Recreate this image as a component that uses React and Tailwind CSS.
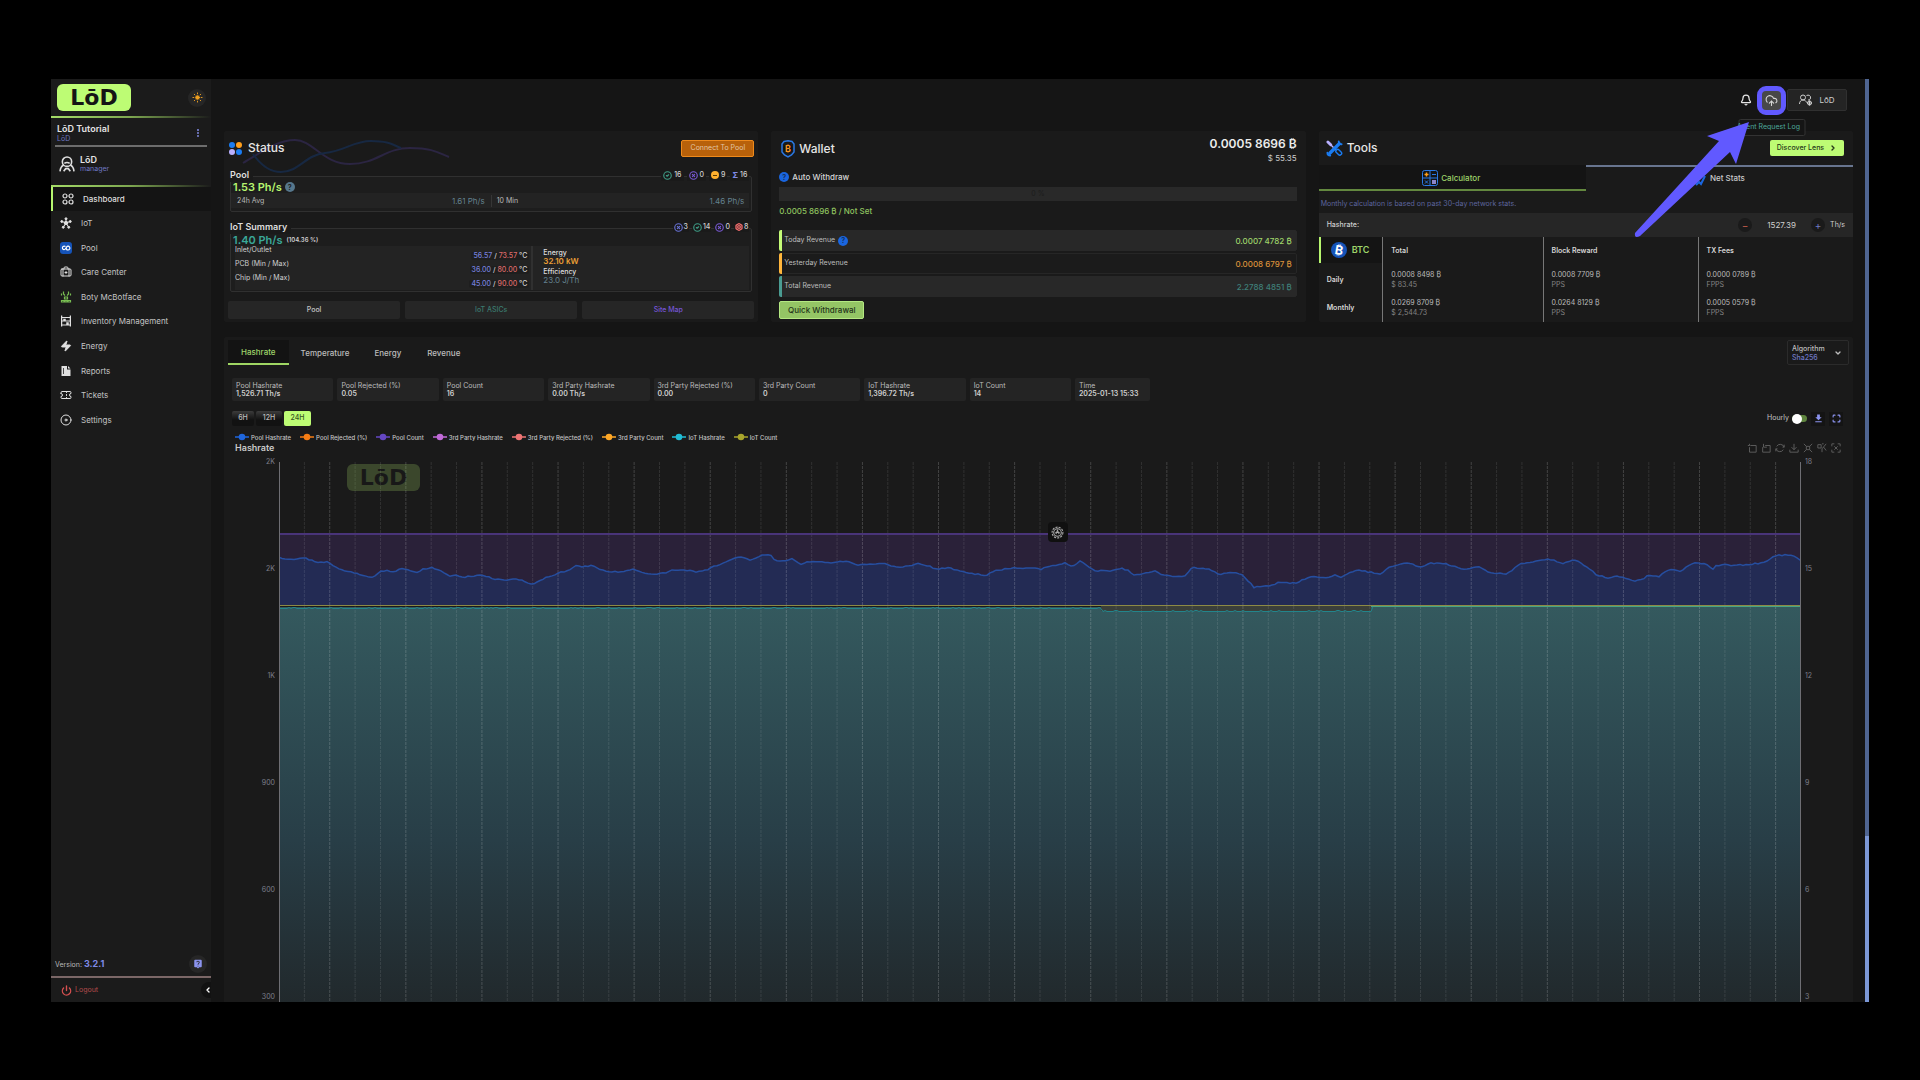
import React from 'react';
import {
    Bell, Bolt, BriefcaseMedical, ChevronDown, ChevronLeft, ChevronRight, CircleCheck, CircleX,
    CloudUpload, Disc, EllipsisVertical, Maximize, Power, Sun, Ticket, Zap,
} from 'lucide-react';
import { MdDownload, MdLiveHelp } from 'react-icons/md';

// ---------- data ----------

const NAV_ITEMS = [
    { label: 'IoT', icon: IotIcon },
    { label: 'Pool', icon: PoolIcon },
    { label: 'Care Center', icon: BriefcaseMedical },
    { label: 'Boty McBotface', icon: BotIcon },
    { label: 'Inventory Management', icon: ShelvesIcon },
    { label: 'Energy', icon: EnergyIcon },
    { label: 'Reports', icon: ReportIcon },
    { label: 'Tickets', icon: Ticket },
    { label: 'Settings', icon: Disc },
];

const TEMPERATURES = [
    { label: 'Inlet/Outlet', min: '56.57', max: '73.57' },
    { label: 'PCB (Min / Max)', min: '36.00', max: '80.00' },
    { label: 'Chip (Min / Max)', min: '45.00', max: '90.00' },
];

const REVENUES = [
    { label: 'Today Revenue', value: '0.0007 4782 ₿', help: true, row: 'bg-[#282828] border-[#282828]', bar: 'bg-[#c5fc77]', text: 'text-[#9fd46a]' },
    { label: 'Yesterday Revenue', value: '0.0008 6797 ₿', row: 'bg-[#1b1b1b] border-[#262626]', bar: 'bg-[#ffb63c]', text: 'text-[#d9903a]' },
    { label: 'Total Revenue', value: '2.2788 4851 ₿', row: 'bg-[#282828] border-[#282828]', bar: 'bg-[#4a9c92]', text: 'text-[#3f7f78]' },
];

const PROFIT_ROWS = [
    { label: 'Daily', cells: [['0.0008 8498 ₿', '$ 83.45'], ['0.0008 7709 ₿', 'PPS'], ['0.0000 0789 ₿', 'FPPS']] },
    { label: 'Monthly', cells: [['0.0269 8709 ₿', '$ 2,544.73'], ['0.0264 8129 ₿', 'PPS'], ['0.0005 0579 ₿', 'FPPS']] },
];

const STATS = [
    ['Pool Hashrate', '1,526.71 Th/s'],
    ['Pool Rejected (%)', '0.05'],
    ['Pool Count', '16'],
    ['3rd Party Hashrate', '0.00 Th/s'],
    ['3rd Party Rejected (%)', '0.00'],
    ['3rd Party Count', '0'],
    ['IoT Hashrate', '1,396.72 Th/s'],
    ['IoT Count', '14'],
];

const LEGEND = [
    ['Pool Hashrate', '#1f66dd'],
    ['Pool Rejected (%)', '#f57c14'],
    ['Pool Count', '#6547c4'],
    ['3rd Party Hashrate', '#c06ad8'],
    ['3rd Party Rejected (%)', '#ee7474'],
    ['3rd Party Count', '#ffa827'],
    ['IoT Hashrate', '#21bcd4'],
    ['IoT Count', '#a8a52c'],
];

// pool hashrate line, [x, y] in chart units
const POOL_LINE = [
    [0, 96], [14, 98], [20, 96], [29, 97], [39, 100], [48, 100], [61, 108], [76, 111], [84, 114], [93, 115],
    [103, 109], [108, 108], [113, 110], [122, 107], [129, 108], [138, 110], [145, 107], [153, 105], [161, 109],
    [171, 114], [178, 113], [185, 115], [205, 113], [212, 116], [224, 118], [237, 117], [245, 119], [251, 122],
    [260, 120], [265, 116], [274, 114], [282, 110], [289, 109], [296, 104], [303, 105], [314, 103], [321, 107],
    [327, 109], [343, 110], [355, 107], [363, 111], [382, 112], [394, 108], [407, 108], [418, 110], [430, 107],
    [441, 102], [453, 97], [462, 95], [472, 98], [483, 93], [491, 92], [496, 99], [505, 99], [513, 96], [521, 103],
    [532, 99], [548, 101], [566, 99], [578, 103], [603, 101], [621, 106], [639, 101], [658, 107], [670, 106],
    [688, 111], [707, 113], [719, 108], [737, 106], [751, 106], [762, 107], [770, 104], [778, 104], [785, 101],
    [792, 104], [797, 103], [801, 99], [816, 109], [835, 109], [842, 106], [850, 109], [855, 113], [870, 111],
    [876, 109], [882, 113], [905, 115], [913, 105], [930, 107], [941, 113], [950, 110], [962, 112], [975, 125],
    [992, 124], [999, 121], [1017, 121], [1033, 114], [1049, 116], [1056, 113], [1062, 116], [1071, 110],
    [1078, 108], [1102, 112], [1109, 105], [1130, 101], [1140, 105], [1154, 101], [1166, 101], [1182, 107],
    [1201, 105], [1209, 110], [1228, 112], [1241, 102], [1271, 97], [1284, 102], [1294, 98], [1301, 100],
    [1311, 108], [1318, 113], [1329, 116], [1337, 114], [1349, 117], [1355, 119], [1364, 117], [1369, 113],
    [1379, 115], [1384, 111], [1394, 107], [1401, 110], [1415, 100], [1429, 103], [1434, 108], [1438, 103],
    [1461, 103], [1483, 101], [1499, 93], [1511, 93], [1522, 98],
];

// repeatable noise in the range 0..1
const noise = (n) => {
    const v = Math.sin(n * 12.9898) * 43758.5453;
    return v - Math.floor(v);
};

// resample the line every 3 units with a little noise
const poolPath = () => {
    const out = [];
    let i = 0;
    for (let x = 0; x <= 1521; x += 3) {
        while (POOL_LINE[i + 1][0] < x) i++;
        const [x0, y0] = POOL_LINE[i];
        const [x1, y1] = POOL_LINE[i + 1];
        const y = y0 + ((y1 - y0) * (x - x0)) / (x1 - x0) + (noise(x) - 0.5) * 1.4;
        out.push(`${x},${y.toFixed(1)}`);
    }
    out.push('1522,98');
    return out.join(' ');
};

// IoT hashrate: dips while some machines are down, then recovers
const iotPath = () => {
    const out = [];
    for (let x = 0; x <= 1522; x += 2) {
        let base = 146.5;
        if (x > 822) base = 149.5;
        if (x > 1092) base = 144.5;
        const y = base - (x < 1092 && noise(x) > 0.8 ? 1 : 0);
        out.push(`${x},${y}`);
    }
    return out.join(' ');
};

// ---------- small drawings ----------

function IotIcon(props) {
    return (
        <svg viewBox="0 0 24 24" fill="currentColor" stroke="currentColor" strokeWidth="2" {...props}>
            <path d="M12 12V4M12 12L4 9M12 12l8-3M12 12l-5 8M12 12l5 8" />
            <circle cx="12" cy="12" r="3.5" />
            <circle cx="12" cy="3.5" r="2" /><circle cx="3.5" cy="9" r="2" /><circle cx="20.5" cy="9" r="2" />
            <circle cx="6.5" cy="20.5" r="2" /><circle cx="17.5" cy="20.5" r="2" />
        </svg>
    );
}

function PoolIcon(props) {
    return (
        <svg viewBox="0 0 24 24" {...props}>
            <rect width="24" height="24" rx="6" fill="#1553b8" />
            <path d="M11 9C7 7 4 10 5 13s5 3 7-1 5-5 7-2 0 6-3 6-4-2-3-4" fill="none" stroke="#fff" strokeWidth="2.4" />
        </svg>
    );
}

function BotIcon({ className }) {
    return (
        <svg viewBox="0 0 24 24" fill="none" stroke="#78bd52" strokeWidth="2.4" className={className}>
            <path d="M7 1v5l3 3M17 1v5l-3 3M3 5v4M21 5v4M9 12h6v4H9zM3 22v-3h5v3zM16 22v-3h5v3zM10 22v-3h4v3z" />
        </svg>
    );
}

function ShelvesIcon(props) {
    return (
        <svg viewBox="0 0 24 24" fill="currentColor" {...props}>
            <path d="M2 1h2.500v3h15V1H22v22h-2.500v-2h-15v2H2zM4.500 6v5h2V7.500h5V11h8V6zM4.500 13v6h8v-4.500h5V19h2v-6z" />
        </svg>
    );
}

function EnergyIcon(props) {
    return <Zap fill="currentColor" {...props} />;
}

function ReportIcon(props) {
    return (
        <svg viewBox="0 0 24 24" fill="currentColor" {...props}>
            <path d="M3 2h11v7h7v13H3z" /><path d="M16 2l5 5h-5z" />
            <path d="M7 6v12" stroke="#1b1b1b" strokeWidth="1.5" />
        </svg>
    );
}

function PersonIcon(props) {
    return (
        <svg viewBox="0 0 24 24" fill="none" stroke="currentColor" strokeWidth="2.4" {...props}>
            <circle cx="12" cy="8.5" r="7" />
            <path d="M7 13.500C4 15 2 18 1.500 23M17 13.500c3 1.500 5 4.500 5.500 9.500M7 23l3-4h4l3 4M8 11c3-2 5-2 8 0" />
        </svg>
    );
}

function DashIcon(props) {
    return (
        <svg viewBox="0 0 24 24" fill="none" stroke="currentColor" strokeWidth="2.4" {...props}>
            <circle cx="6" cy="6" r="4" /><circle cx="18" cy="6" r="4" />
            <circle cx="6" cy="18" r="4" /><circle cx="18" cy="18" r="4" />
        </svg>
    );
}

function UsersIcon(props) {
    return (
        <svg viewBox="0 0 28 24" fill="none" stroke="currentColor" strokeWidth="2" {...props}>
            <circle cx="8" cy="7" r="5" /><path d="M1 20c0-5 3-8 7-8s6 2 7 5" />
            <path d="M15 3c4-2 9 0 8 5 0 3-3 4-5 4" /><circle cx="21" cy="18" r="4" /><path d="M21 13v10M16 18h10" />
        </svg>
    );
}

function StatusIcon() {
    return (
        <svg viewBox="0 0 13 13" className="size-[13px]">
            <circle cx="3" cy="3" r="3" fill="#1a7cf2" /><circle cx="10" cy="3" r="3" fill="#ff9f1c" />
            <circle cx="3" cy="10" r="3" fill="#b9b0ff" /><circle cx="10" cy="10" r="3" fill="#1a7cf2" />
        </svg>
    );
}

function WalletIcon() {
    return (
        <svg viewBox="0 0 14 18" className="h-[18px] w-[14px]" fill="none">
            <path d="M3 1.500L7 0.800l4 0.700 2 2.500v8l-2.500 3L7 17l-3.500-2L1 12V4z" stroke="#2a78e4" strokeWidth="1.5" />
            <circle cx="7" cy="8.5" r="4.5" fill="#111" />
            <text x="7" y="12" textAnchor="middle" fontSize="9" fontWeight="700" fill="#f59420">₿</text>
        </svg>
    );
}

function ToolsIcon() {
    return (
        <svg viewBox="0 0 18 18" className="size-[17px]" fill="none" strokeLinecap="round">
            <path d="M2 2l3 3" stroke="#b9b0ff" strokeWidth="3" />
            <path d="M5 5l5 5" stroke="#b9b0ff" strokeWidth="1.5" />
            <path d="M4 14L14 4" stroke="#1a7cf2" strokeWidth="3.5" />
            <path d="M1.500 13.500a3 3 0 0 0 3 3M13.500 1.500a3 3 0 0 0 3 3" stroke="#1a7cf2" strokeWidth="2" />
            <rect x="10" y="11" width="7" height="4" rx="2" transform="rotate(45 13.5 13)" stroke="#1a7cf2" strokeWidth="1.5" />
        </svg>
    );
}

function CalculatorIcon() {
    return (
        <svg viewBox="0 0 16 16" className="size-4" fill="none" stroke="#2a78e4">
            <rect x="0.5" y="0.5" width="15" height="15" rx="2" /><path d="M8 1v14M1 8h14" />
            <path d="M4.500 2.500v4M2.500 4.500h4" stroke="#ff9f1c" strokeWidth="1.5" />
            <path d="M10 4.500h4M3 10.500l3 3M6 10.500l-3 3" />
            <rect x="10" y="10" width="4" height="4" fill="#8d86c9" stroke="none" />
        </svg>
    );
}

function BitcoinIcon() {
    return (
        <svg viewBox="0 0 18 18" className="size-4">
            <circle cx="9" cy="9" r="9" fill="#1553b8" />
            <text x="9" y="14" textAnchor="middle" fontSize="14" fontWeight="700" fill="#fff" transform="rotate(10 9 9)">₿</text>
        </svg>
    );
}

const Logo = ({ className }) => (
    <div className={`flex items-center justify-center rounded-md font-['DejaVu_Sans'] text-[22px] leading-none font-bold text-[#151515] ${className}`}>
        LōD
    </div>
);

const HelpDot = ({ className }) => (
    <span className={`flex size-[10px] items-center justify-center rounded-full text-[7px] leading-none font-bold ${className}`}>?</span>
);

const Count = ({ icon, value, tight }) => (
    <span className={`flex items-center bg-[#1a1a1a] ${tight ? 'gap-px px-px' : 'gap-[2px] px-[2px]'}`}>{icon}{value}</span>
);

// ---------- sidebar ----------

function Sidebar() {
    return (
        <aside className="flex w-40 shrink-0 flex-col bg-[#1b1b1b]">
            <div className="flex h-[37px] items-center justify-between pr-[5px] pl-[6px]">
                <Logo className="h-[27px] w-[74px] bg-[#bdfc74]" />
                <button aria-label="Theme" className="flex size-[18px] items-center justify-center rounded-full bg-[#262626]">
                    <Sun className="size-[11px] text-[#f0a020]" fill="currentColor" />
                </button>
            </div>
            <div className="h-[2px] bg-linear-to-r from-[#a5dc68] via-[#7da650] to-transparent" />
            <div className="mx-1 flex h-[29px] items-center justify-between border-b-2 border-[#6d6d6d] pt-[3px] pr-1 pl-[2px]">
                <div>
                    <div className="text-[9px] leading-[10px] font-semibold text-[#e4e4e4]">LōD Tutorial</div>
                    <div className="text-[7px] leading-[9px] text-[#6f78c4]">LōD</div>
                </div>
                <button aria-label="More"><EllipsisVertical className="size-[10px] text-[#7f88dc]" strokeWidth={3} /></button>
            </div>
            <div className="flex h-[38px] items-center gap-[5px] pb-1 pl-2">
                <PersonIcon className="size-4 text-[#dedede]" />
                <div>
                    <div className="text-[9px] leading-[10px] font-semibold text-[#e4e4e4]">LōD</div>
                    <div className="text-[7px] leading-[8px] text-[#6f78c4]">manager</div>
                </div>
            </div>
            <div className="h-[2px] bg-linear-to-r from-[#a5dc68] via-[#7da650] to-transparent" />
            <nav className="text-[8px] text-[#c4c4c4]">
                <a href="#dashboard" className="flex h-6 items-center gap-[9px] border-l-2 border-[#b6f56f] bg-[#141414] pl-[9px] font-medium text-[#dedede]">
                    <DashIcon className="size-3" />
                    Dashboard
                </a>
                <div className="grid h-[221px] grid-rows-9">
                    {NAV_ITEMS.map(({ label, icon: Icon }) => (
                        <a key={label} href={`#${label}`} className="flex items-center gap-[9px] pl-[9px]">
                            <Icon className="size-3 text-[#e0e0e0]" />
                            {label}
                        </a>
                    ))}
                </div>
            </nav>
            <div className="mt-auto flex h-6 items-center justify-between pr-1 pl-1">
                <span className="text-[7px] text-[#b9b9b9]">Version: <b className="text-[9px] text-[#7f8ae6]">3.2.1</b></span>
                <button aria-label="Help" className="flex size-[18px] items-center justify-center rounded-full bg-[#262626]">
                    <MdLiveHelp className="size-[10px] text-[#8b93ee]" />
                </button>
            </div>
            <div className="flex h-[26px] items-center justify-between border-t-2 border-[#7b6767] pl-[10px]">
                <a href="#logout" className="flex items-center gap-[3px] text-[7px] text-[#b34b4b]">
                    <Power className="size-[11px] text-[#d65050]" strokeWidth={3} />
                    Logout
                </a>
                <button aria-label="Collapse" className="flex h-4 w-[10px] items-center justify-end rounded-l-full bg-[#121212]">
                    <ChevronLeft className="-mr-px size-2 text-white" strokeWidth={4} />
                </button>
            </div>
        </aside>
    );
}

// ---------- top bar ----------

function TopBar() {
    return (
        <header className="relative z-20 flex h-[52px] items-start justify-end pt-[7px] pr-[6px]">
            <button aria-label="Notifications" className="mt-2 mr-[5px] text-[#e6e6e6]">
                <Bell className="size-[12px]" strokeWidth={2.5} />
            </button>
            <div className="relative">
                <button aria-label="Agent requests" className="flex size-[29px] items-center justify-center rounded-[9px] border-5 border-[#6159ff] bg-[#484848] text-[#d8d8d8]">
                    <CloudUpload className="size-[13px]" />
                </button>
                <div role="tooltip" className="absolute top-[33px] left-1/2 flex h-[17px] w-[67px] -translate-x-1/2 items-center justify-end rounded-xs border border-[#333] bg-[#151515] pr-1 text-[7px] whitespace-nowrap text-[#4da89b]">
                    Agent Request Log
                </div>
                {/* pointer from the tools card to the request log */}
                <svg viewBox="0 0 120 120" className="pointer-events-none absolute top-[35px] right-[34px] size-[120px]">
                    <path
                        d="M117 1L75 15L87 20L3 112Q2 118 8 115L98 31L104 43Z"
                        fill="#6159ff"
                    />
                </svg>
            </div>
            <button className="mt-[3px] ml-[1px] flex h-[22px] w-[60px] items-center justify-center gap-[6px] rounded-xs border border-[#303030] bg-[#242424] text-[8px] text-[#cfcfcf]">
                <UsersIcon className="h-[12px] w-[14px]" />
                LōD
            </button>
        </header>
    );
}

// ---------- cards ----------

function StatusCard() {
    return (
        <section className="relative rounded-xs bg-[#1a1a1a]">
            <svg viewBox="0 0 208 36" fill="none" strokeWidth="2" className="absolute top-[6px] left-[18px] h-9 w-[208px]">
                <path d="M1 26C20 15 35 3 53 3s28 24 55 24 35-16 60-16 30 6 39 9" stroke="#2b2542" />
                <path d="M11 17C18 27 28 35 39 35c18 0 24-17 44-19s28-12 46-12 22 4 30 7" stroke="#172842" />
            </svg>
            <div className="relative flex h-[34px] items-center justify-between pr-1 pl-[5px]">
                <h2 className="flex items-center gap-[6px] text-[12px] font-medium text-[#e6e6e6]"><StatusIcon />Status</h2>
                <button className="h-[17px] w-[73px] rounded-xs border border-[#ee8a1c] bg-[#b8610a] text-[7px] text-[#e2c7a8]">Connect To Pool</button>
            </div>

            <div className="mx-[6px] mt-[2px]">
                <div className="relative flex h-4 items-center justify-between">
                    <h3 className="bg-[#1a1a1a] pr-1 text-[9px] font-semibold text-[#dedede]">Pool</h3>
                    <div className="mr-[3px] flex gap-[3px] text-[7px] font-medium text-[#d0d0d0]">
                        <Count icon={<CircleCheck className="size-[9px] text-[#3e9c86]" strokeWidth={3} />} value="16" />
                        <Count icon={<CircleX className="size-[9px] text-[#7a5ad6]" strokeWidth={3} />} value="0" />
                        <Count icon={<span className="flex size-[8px] items-center justify-center rounded-full bg-[#ffb02e]"><span className="h-px w-1 bg-[#5a3a00]" /></span>} value="9" />
                        <Count icon={<b className="text-[8px] text-[#7f8ae6]">Σ</b>} value="16" />
                    </div>
                </div>
                <div className="-mt-[7px] h-9 rounded-xs border border-[#303030] bg-[#1d1d1d] pt-1">
                    <div className="flex h-3 items-center gap-[3px] pl-[2px] text-[11px] leading-3 font-semibold text-[#b6f56f]">
                        1.53 Ph/s <HelpDot className="bg-[#56778c] text-[#1d1d1d]" />
                    </div>
                    <div className="mr-[2px] flex h-[15px] items-center bg-[#232323] text-[8px]">
                        <div className="flex flex-1 items-center justify-between px-[6px]"><span className="text-[7px] leading-3 text-[#b9b9b9]">24h Avg</span><span className="leading-3 text-[#64828f]">1.61 Ph/s</span></div>
                        <div className="flex flex-1 items-center justify-between border-l border-[#363636] px-[5px]"><span className="text-[7px] leading-3 text-[#b9b9b9]">10 Min</span><span className="leading-3 text-[#64828f]">1.46 Ph/s</span></div>
                    </div>
                </div>
            </div>

            <div className="mx-[6px] mt-[7px]">
                <div className="relative flex h-4 items-center justify-between">
                    <h3 className="bg-[#1a1a1a] pr-1 text-[9px] font-semibold text-[#dedede]">IoT Summary</h3>
                    <div className="mr-[3px] flex gap-[3px] text-[7px] font-medium text-[#d0d0d0]">
                        <Count tight icon={<CircleX className="size-[9px] text-[#6872d6]" strokeWidth={3} />} value="3" />
                        <Count tight icon={<CircleCheck className="size-[9px] text-[#3e9c86]" strokeWidth={3} />} value="14" />
                        <Count tight icon={<CircleX className="size-[9px] text-[#7a5ad6]" strokeWidth={3} />} value="0" />
                        <Count tight icon={<Bolt className="size-[8px] text-[#ee6b6b]" strokeWidth={4} />} value="8" />
                    </div>
                </div>
                <div className="-mt-[7px] h-16 rounded-xs border border-[#303030] bg-[#1d1d1d] pt-[5px]">
                    <div className="flex h-3 items-center gap-1 pl-[2px] text-[11px] leading-3 font-semibold text-[#3aa899]">
                        1.40 Ph/s <span className="text-[6px] text-[#d0d0d0]">(104.36 %)</span>
                    </div>
                    <div className="mr-[2px] ml-1 flex h-11 bg-[#232323]">
                        <div className="w-[58%] border-r-2 border-[#303030] pr-[2px]">
                            {TEMPERATURES.map((t) => (
                                <div key={t.label} className="flex h-[14px] justify-between text-[7px] leading-[8px] text-[#d0d0d0]">
                                    <span>{t.label}</span>
                                    <span className="self-end rounded-xs bg-[#1e1e1e] px-[2px] font-medium">
                                        <span className="text-[#7680dc]">{t.min}</span> / <span className="text-[#dc6a6a]">{t.max}</span> °C
                                    </span>
                                </div>
                            ))}
                        </div>
                        <dl className="pt-[3px] pl-[10px] text-[8px] leading-[8px] text-[#64828f]">
                            <dt className="text-[7px] font-medium text-[#dedede]">Energy</dt>
                            <dd className="font-semibold text-[#eb9f35]">32.10 kW</dd>
                            <dt className="mt-[3px] text-[7px] font-medium text-[#dedede]">Efficiency</dt>
                            <dd>23.0 J/Th</dd>
                        </dl>
                    </div>
                </div>
            </div>

            <div className="mx-1 mt-[9px] grid grid-cols-3 gap-[5px] text-[7px] font-medium">
                <button className="h-[18px] rounded-xs bg-[#262626] text-[#c4c4c4]">Pool</button>
                <button className="h-[18px] rounded-xs bg-[#262626] text-[#3b7a6e]">IoT ASICs</button>
                <button className="h-[18px] rounded-xs bg-[#262626] text-[#7656d8]">Site Map</button>
            </div>
        </section>
    );
}

function WalletCard() {
    return (
        <section className="rounded-xs bg-[#1a1a1a] pr-[9px] pl-2">
            <div className="flex h-9 items-center justify-between">
                <h2 className="flex items-center gap-1 pl-[2px] text-[12px] font-medium text-[#e6e6e6]"><WalletIcon />Wallet</h2>
                <div className="pt-[3px] text-right leading-[14px]">
                    <div className="text-[12px] font-semibold text-[#ececec]">0.0005 8696 ₿</div>
                    <div className="text-[8px] leading-[14px] text-[#cfcfcf]">$ 55.35</div>
                </div>
            </div>
            <div className="mt-[3px] flex h-[14px] items-center gap-[3px] text-[8px] font-medium text-[#d6d6d6]">
                <HelpDot className="bg-[#1a66e0] text-[#12305f]" />Auto Withdraw
            </div>
            <div role="progressbar" aria-label="Auto Withdraw" aria-valuenow={0} className="mt-[3px] h-[14px] bg-[#292929] text-center text-[7px] leading-[14px] text-[#1c1c1c]">0 %</div>
            <div className="mt-[3px] h-[14px] text-[8px] leading-[14px] font-medium text-[#8fc25f]">0.0005 8696 ₿ / Not Set</div>
            <div className="mt-3 grid gap-[2px]">
                {REVENUES.map((r) => (
                    <div key={r.label} className={`flex h-[21px] items-center rounded-xs border text-[8px] ${r.row}`}>
                        <span className={`-ml-px h-[21px] w-[3px] rounded-l-xs ${r.bar}`} />
                        <span className="mr-[3px] ml-[2px] text-[7px] text-[#bdbdbd]">{r.label}</span>
                        {r.help && <HelpDot className="bg-[#1a66e0] text-[#12305f]" />}
                        <span className={`mr-1 ml-auto font-medium ${r.text}`}>{r.value}</span>
                    </div>
                ))}
            </div>
            <button className="mt-1 block h-[18px] w-[85px] rounded-xs border border-[#b4e882] bg-[#94c565] text-[8px] font-medium text-[#23331a]">Quick Withdrawal</button>
        </section>
    );
}

function ToolsCard() {
    return (
        <section className="rounded-xs bg-[#1a1a1a]">
            <div className="flex h-[34px] items-center justify-between pr-[9px] pl-[7px]">
                <h2 className="flex items-center gap-1 text-[12px] font-medium text-[#e6e6e6]"><ToolsIcon />Tools</h2>
                <button className="flex h-4 w-[74px] items-center justify-center gap-[5px] rounded-xs bg-[#bdfc74] text-[7px] font-medium text-[#26381a]">
                    Discover Lens <ChevronRight className="size-[8px]" strokeWidth={4} />
                </button>
            </div>
            <div className="grid h-[26px] grid-cols-2 text-[8px] font-medium">
                <button className="flex items-center justify-center gap-[3px] border-b-2 border-[#63883f] bg-[#141414] pt-px pr-[2px] text-[#9fd46a]"><CalculatorIcon />Calculator</button>
                <button className="flex items-center justify-center gap-1 border-t-2 border-[#68758f] pr-1 pb-[2px] text-[#c9c9c9]">
                    <svg viewBox="0 0 16 16" className="size-4" fill="none" stroke="#1a66e0" strokeWidth="2"><path d="M1 10l4 2 5-5 5-5M6 15l3-3 2 2 4-8" /></svg>
                    Net Stats
                </button>
            </div>
            <p className="h-[22px] pt-[7px] pl-[2px] text-[7px] leading-3 text-[#5d659f]">Monthly calculation is based on past 30-day network stats.</p>
            <div className="flex h-6 items-center bg-[#262626] pr-2 pl-2 text-[8px] text-[#cfcfcf]">
                <label htmlFor="hashrate" className="mr-auto text-[7px] font-medium">Hashrate:</label>
                <button aria-label="Decrease" className="size-[14px] rounded-full bg-[#1a1a1a] text-[10px] leading-[12px] text-[#c05a4a]">−</button>
                <input id="hashrate" defaultValue="1527.39" className="w-[59px] bg-transparent text-center outline-none" />
                <button aria-label="Increase" className="mr-[5px] size-[14px] rounded-full bg-[#1a1a1a] text-[10px] leading-[12px] text-[#6f7cc4]">+</button>
                <span className="text-[7px]">Th/s</span>
            </div>
            <table className="w-full table-fixed text-left text-[7px] text-[#d6d6d6]">
                <colgroup>
                    <col className="w-[12%]" />
                    <col className="w-[30%]" />
                    <col className="w-[29%]" />
                    <col />
                </colgroup>
                <thead>
                    <tr className="h-[29px]">
                        <th className="p-0 align-top">
                            <div className="flex h-[26px] items-center gap-[5px] border-l-2 border-[#b6f56f] bg-[#141414] pl-[10px] text-[9px] font-semibold text-[#9fd46a]"><BitcoinIcon />BTC</div>
                        </th>
                        <th className="border-l border-[#777] pl-2 font-semibold">Total</th>
                        <th className="border-l border-[#777] pl-2 font-semibold">Block Reward</th>
                        <th className="border-l border-[#777] pl-2 font-semibold">TX Fees</th>
                    </tr>
                </thead>
                <tbody>
                    {PROFIT_ROWS.map((row) => (
                        <tr key={row.label} className="h-7">
                            <th className="pl-2 font-semibold">{row.label}</th>
                            {row.cells.map(([amount, note]) => (
                                <td key={amount} className="border-l border-[#777] pl-2 leading-[10px]">
                                    <div className="text-[#bcbcbc]">{amount}</div>
                                    <div className="text-[#858585]">{note}</div>
                                </td>
                            ))}
                        </tr>
                    ))}
                </tbody>
            </table>
        </section>
    );
}

// ---------- chart ----------

function ToolboxIcons() {
    const shapes = [
        'M3 1v2M1 3h2M4 3h7v8H3V5',
        'M3 1v4h4M5 3h6v8H2V5',
        'M2 4a5 5 0 0 1 9 1M10 8a5 5 0 0 1-9-1M11 2v3H9M1 10V7h2',
        'M6 1v7M3 5l3 3 3-3M1 8v3h10V8',
        'M1 1l3 3M11 1L8 4M1 11l3-3M11 11L8 8M4 4h4v4H4z',
        'M1 2h4v4H1zM11 1L6 7v4M8 5l3 4M6 1h2',
        'M1 1h3M8 1h3v3M11 8v3H8M4 11H1V8M1 4V1M4 4l4 4M8 4L4 8',
    ];
    return (
        <div className="flex gap-1 text-[#686868]">
            {shapes.map((d) => (
                <svg key={d} viewBox="0 0 12 12" className="size-[10px]" fill="none" stroke="currentColor"><path d={d} /></svg>
            ))}
        </div>
    );
}

function HashrateChart() {
    const pool = poolPath();
    return (
        <div className="relative mx-2 mt-2 flex pr-[24px] text-[7px] text-[#7c7f8a]">
            <div className="-mt-1 flex h-[543px] w-[47px] flex-col justify-between pr-1 text-right leading-[8px]">
                {['2K', '2K', '1K', '900', '600', '300'].map((v, i) => <span key={i}>{v}</span>)}
            </div>
            <div className="relative h-[547px] flex-1">
                <svg viewBox="0 0 1522 547" preserveAspectRatio="none" className="h-full w-full" fill="none">
                    <defs>
                        <linearGradient id="iotFill" x1="0" y1="0" x2="0" y2="1">
                            <stop offset="0" stopColor="#34595e" />
                            <stop offset="0.58" stopColor="#283e47" />
                            <stop offset="1" stopColor="#21282b" />
                        </linearGradient>
                    </defs>
                    <rect x="0" y="72" width="1522" height="72" fill="#2a2139" />
                    <polygon points={`${pool} 1522,144 0,144`} fill="#232b54" />
                    <rect x="0" y="145" width="1522" height="402" fill="url(#iotFill)" />
                    <rect x="822" y="144" width="270" height="5" fill="#3b3f3a" />
                    {Array.from({ length: 59 }, (_, i) => (
                        <line
                            key={i}
                            x1={((i + 1) * 1522) / 60}
                            x2={((i + 1) * 1522) / 60}
                            y1="0"
                            y2="547"
                            stroke="#ffffff"
                            strokeOpacity={i % 3 === 1 ? 0.18 : 0.1}
                            strokeDasharray="3 1"
                        />
                    ))}
                    <path d="M0 72H1522" stroke="#493479" strokeWidth="2" />
                    <polyline points={pool} stroke="#264e9f" strokeWidth="1.5" />
                    <polyline points={iotPath()} stroke="#22858c" />
                    <path d="M0 143.500H1522" stroke="#8d8a45" />
                    <path d="M1092 144.500H1522" stroke="#49a583" />
                    <path d="M0.500 0V547M1521.500 0V547" stroke="#6e6e73" />
                </svg>
                <Logo className="absolute top-[2px] left-[68px] h-[27px] w-[73px] bg-[#bdfc74] opacity-20" />
                <button aria-label="Chart settings" className="absolute top-[60px] left-[50.5%] flex size-5 items-center justify-center rounded-sm bg-[#101010] text-[#a9a9a9]">
                    <svg viewBox="0 0 24 24" className="size-[13px]" fill="none" stroke="currentColor" strokeWidth="2">
                        <circle cx="12" cy="12" r="10" strokeDasharray="4 2" /><circle cx="12" cy="12" r="7" /><path d="M9 15l3-7 3 7M8 12h8" />
                    </svg>
                </button>
            </div>
            <div className="-mt-1 flex h-[543px] w-[20px] flex-col justify-between pl-1 leading-[8px]">
                {['18', '15', '12', '9', '6', '3'].map((v) => <span key={v}>{v}</span>)}
            </div>
        </div>
    );
}

function ChartCard() {
    return (
        <section className="mt-[15px] rounded-xs bg-[#1a1a1a] pt-[3px]">
            <div className="mx-1 flex h-[25px] justify-between text-[8px] font-medium text-[#bdbdbd]">
                <div className="flex">
                    <button className="border-b-2 border-[#9fd663] bg-[#131313] px-[13px] text-[#9fd46a]">Hashrate</button>
                    <button className="px-3">Temperature</button>
                    <button className="px-[13px]">Energy</button>
                    <button className="px-[13px]">Revenue</button>
                </div>
                <div className="relative flex w-[62px] flex-col justify-center rounded-xs border border-[#2b2b2b] pl-1">
                    <label htmlFor="algorithm" className="text-[7px] leading-[9px]">Algorithm</label>
                    <select id="algorithm" className="h-[9px] appearance-none bg-transparent text-[7px] leading-[9px] text-[#6f78c4] outline-none">
                        <option>Sha256</option>
                    </select>
                    <ChevronDown className="pointer-events-none absolute top-2 right-[6px] size-2" strokeWidth={4} />
                </div>
            </div>

            <div className="mx-2 mt-[13px] flex max-w-[918px] gap-1 text-[7px] leading-[8px] text-[#bdbdbd]">
                {STATS.map(([label, value]) => (
                    <div key={label} className="flex h-[23px] flex-1 flex-col justify-center rounded-xs bg-[#242424] pl-1">
                        <span>{label}</span><b className="font-semibold text-[#d0d0d0]">{value}</b>
                    </div>
                ))}
                <div className="flex h-[23px] w-[75px] flex-col justify-center rounded-xs bg-[#242424] pl-1">
                    <span>Time</span><b className="font-semibold whitespace-nowrap text-[#d0d0d0]">2025-01-13 15:33</b>
                </div>
            </div>

            <div className="mt-[10px] mr-[10px] ml-2 flex h-[15px] justify-between">
                <div className="flex gap-[2px] text-[7px] font-medium text-[#bdbdbd]">
                    <button className="w-[22px] rounded-xs bg-linear-to-b from-[#3c3c3c] to-[#121212] to-60%">6H</button>
                    <button className="w-[26px] rounded-xs bg-linear-to-b from-[#3c3c3c] to-[#121212] to-60%">12H</button>
                    <button className="w-[27px] rounded-xs bg-[#bdfc74] text-[#3a5424]">24H</button>
                </div>
                <div className="flex items-center gap-1 text-[7px] text-[#c4c4c4]">
                    <label className="flex items-center gap-[3px]">
                        Hourly
                        <input type="checkbox" className="sr-only" />
                        <span className="flex h-[7px] w-[15px] items-center rounded-full bg-[#5f853f]"><span className="size-[10px] shrink-0 rounded-full bg-white" /></span>
                    </label>
                    <button aria-label="Download" className="flex size-[14px] items-center justify-center bg-[#141414]"><MdDownload className="size-[11px] text-[#8b93ee]" /></button>
                    <button aria-label="Fullscreen" className="flex size-[14px] items-center justify-center bg-[#141414]"><Maximize className="size-[9px] text-[#8b93ee]" strokeWidth={3} /></button>
                </div>
            </div>

            <ul className="mx-[11px] mt-[6px] flex h-[10px] items-center gap-[9px] text-[6px] font-medium text-[#c4c4c4]">
                {LEGEND.map(([name, color]) => (
                    <li key={name} className="flex items-center gap-[2px]">
                        <svg viewBox="0 0 14 8" className="h-2 w-[14px]"><path d="M0 4h14" stroke={color} strokeWidth="1.5" /><circle cx="7" cy="4" r="3.3" fill={color} /></svg>
                        {name}
                    </li>
                ))}
            </ul>
            <div className="flex h-3 items-center justify-between pr-3 pl-[11px]">
                <h3 className="text-[9px] font-semibold text-[#c9c9c9]">Hashrate</h3>
                <ToolboxIcons />
            </div>
            <HashrateChart />
        </section>
    );
}

export default function App() {
    return (
        <div className="flex h-screen bg-black px-[51px] pt-[79px] pb-[78px] font-['Inter',sans-serif]">
            <Sidebar />
            <main className="min-w-0 flex-1 overflow-hidden bg-[#151515] pr-3 pl-[13px]">
                <TopBar />
                <div className="grid grid-cols-3 gap-[13px]">
                    <StatusCard />
                    <WalletCard />
                    <ToolsCard />
                </div>
                <ChartCard />
            </main>
            <div className="w-1 bg-[#7b97d6]">
                <div className="h-[82%] bg-[#4f6592]" />
            </div>
        </div>
    );
}
